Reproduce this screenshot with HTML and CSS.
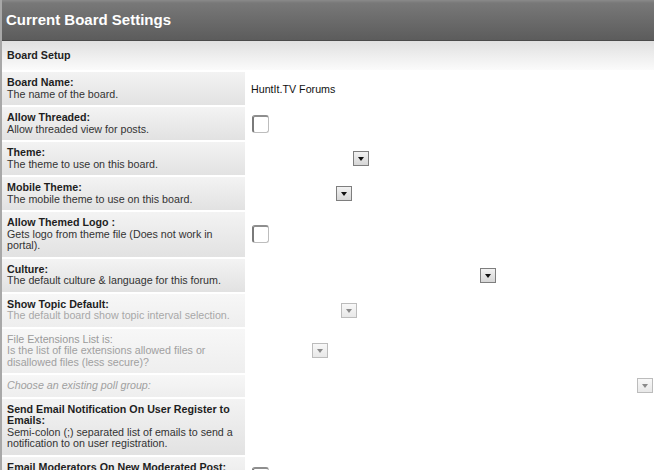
FILE: index.html
```html
<!DOCTYPE html>
<html lang="en">
<head>
    <meta charset="UTF-8">
    <title>Current Board Settings</title>
    <link rel="stylesheet" href="styles.css">
</head>
<body>
    <div class="settings">
        <div class="header">Current Board Settings</div>
        <div class="section">Board Setup</div>

        <div class="row">
            <div class="label"><b>Board Name:</b><br>The name of the board.</div>
            <div class="value">HuntIt.TV Forums</div>
        </div>
        <div class="row">
            <div class="label"><b>Allow Threaded:</b><br>Allow threaded view for posts.</div>
            <div class="value"><span class="checkbox"></span></div>
        </div>
        <div class="row">
            <div class="label"><b>Theme:</b><br>The theme to use on this board.</div>
            <div class="value"><span class="dropdown w-theme"><span class="arrow"></span></span></div>
        </div>
        <div class="row">
            <div class="label"><b>Mobile Theme:</b><br>The mobile theme to use on this board.</div>
            <div class="value"><span class="dropdown w-mobile"><span class="arrow"></span></span></div>
        </div>
        <div class="row">
            <div class="label"><b>Allow Themed Logo :</b><br>Gets logo from theme file (Does not work in portal).</div>
            <div class="value"><span class="checkbox"></span></div>
        </div>
        <div class="row">
            <div class="label"><b>Culture:</b><br>The default culture &amp; language for this forum.</div>
            <div class="value"><span class="dropdown w-culture"><span class="arrow"></span></span></div>
        </div>
        <div class="row faded">
            <div class="label"><b>Show Topic Default:</b><br><span class="muted">The default board show topic interval selection.</span></div>
            <div class="value"><span class="dropdown w-topic"><span class="arrow light"></span></span></div>
        </div>
        <div class="row faded">
            <div class="label muted"><span class="plain">File Extensions List is:</span><br>Is the list of file extensions allowed files or disallowed files (less secure)?</div>
            <div class="value"><span class="dropdown w-ext"><span class="arrow light"></span></span></div>
        </div>
        <div class="row faded">
            <div class="label muted"><i>Choose an existing poll group:</i></div>
            <div class="value"><span class="dropdown w-poll"><span class="arrow light"></span></span></div>
        </div>
        <div class="row">
            <div class="label"><b>Send Email Notification On User Register to Emails:</b><br>Semi-colon (;) separated list of emails to send a notification to on user registration.</div>
            <div class="value"></div>
        </div>
        <div class="row">
            <div class="label"><b>Email Moderators On New Moderated Post:</b><br>Email moderators when a new post is waiting for approval.</div>
            <div class="value top"><span class="checkbox"></span></div>
        </div>
    </div>
</body>
</html>
```

FILE: styles.css
```css
body {
    margin: 0;
    background: #fff;
    font-family: Arial, "Liberation Sans", sans-serif;
    color: #222;
}
.settings {
    width: 654px;
    border-left: 2px solid #a8a8a8;
    box-sizing: border-box;
}
.header {
    height: 41px;
    line-height: 40px;
    padding-left: 4px;
    background: linear-gradient(to bottom, #8a8a8a 0, #787878 3px, #5c5c5c 100%);
    border-bottom: 1px solid #4a4a4a;
    box-sizing: border-box;
    color: #fff;
    font-size: 15px;
    font-weight: bold;
}
.section {
    height: 29px;
    line-height: 29px;
    padding-left: 5px;
    background: linear-gradient(to bottom, #e0e0e0, #fbfbfb);
    font-size: 10.7px;
    font-weight: bold;
}
.row {
    display: grid;
    grid-template-columns: 243px 1fr;
    column-gap: 6px;
    margin-top: 2px;
}
.label {
    padding: 5px 8px 5px 5px;
    background: linear-gradient(to bottom, #f3f3f3, #e2e2e2);
    font-size: 10.7px;
    line-height: 11.5px;
    color: #333;
}
.label b {
    color: #1e1e1e;
}
.value {
    display: flex;
    align-items: center;
    font-size: 10.7px;
    color: #111;
}
.value.top {
    align-items: flex-start;
    padding-top: 10px;
}
.faded .label {
    background: linear-gradient(to bottom, #f7f7f7, #eeeeee);
}
.muted {
    color: #a8a8a8;
}
.label.muted {
    color: #a0a0a0;
}
.plain {
    color: #9a9a9a;
}
.checkbox {
    width: 17px;
    height: 18px;
    margin-left: 1px;
    border: 1px solid #bdbdbd;
    border-left: 2px solid #7a7a7a;
    border-top: 2px solid #8e8e8e;
    border-radius: 3px;
    background: #fff;
    box-sizing: border-box;
}
.dropdown {
    display: flex;
    justify-content: flex-end;
}
.arrow {
    width: 16px;
    height: 15px;
    border: 1px solid #7e7e7e;
    background: linear-gradient(to bottom, #f2f2f2, #d6d6d6);
    box-sizing: border-box;
    position: relative;
}
.arrow::after {
    content: "";
    position: absolute;
    left: 4px;
    top: 5px;
    border-left: 3.5px solid transparent;
    border-right: 3.5px solid transparent;
    border-top: 4px solid #111;
}
.arrow.light {
    border-color: #bcbcbc;
    background: linear-gradient(to bottom, #f8f8f8, #e8e8e8);
}
.arrow.light::after {
    border-top-color: #8a8a8a;
}
.w-theme { width: 118px; }
.w-mobile { width: 101px; }
.w-culture { width: 245px; }
.w-topic { width: 106px; }
.w-ext { width: 77px; }
.w-poll { width: 402px; }
```
